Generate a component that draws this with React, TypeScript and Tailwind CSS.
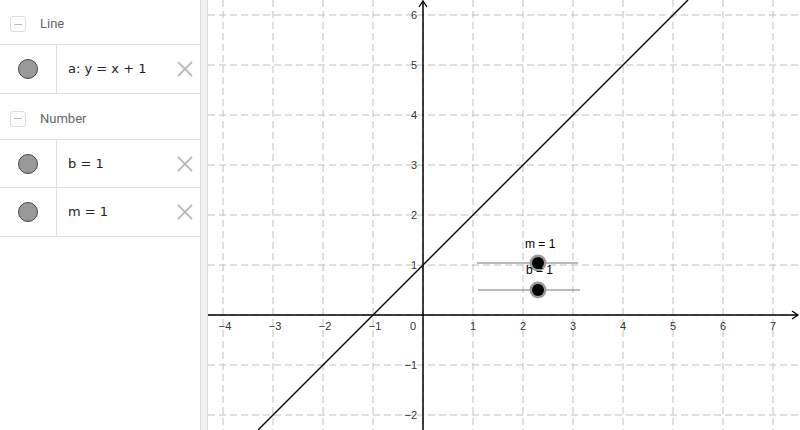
import React from "react";

const font = { fontFamily: "Roboto, 'Liberation Sans', sans-serif" };

function Header({ label, h }: { label: string; h: string }) {
  return (
    <div className={`flex items-center ${h} pt-[4px]`}>
      <div className="ml-[10px] w-[16px] h-[16px] rounded-[3px] border border-[#dddddd] flex items-center justify-center">
        <div className="w-[8px] h-[1px] bg-[#bbbbbb]" />
      </div>
      <span className="ml-[14px] text-[13px] text-[#666666]">{label}</span>
    </div>
  );
}

function Row({ text, cls }: { text: string; cls: string }) {
  return (
    <div className={`flex items-stretch border-[#e0e0e0] ${cls}`}>
      <div className="w-[57px] border-r border-[#e0e0e0] flex items-center justify-center">
        <div className="w-[20px] h-[20px] rounded-full bg-[#999999] border-[1.5px] border-[#444444]" />
      </div>
      <div
        className="flex-1 flex items-center pl-[11px] text-[13px] text-[#222222]"
        style={{ fontFamily: "'DejaVu Sans', sans-serif" }}
      >
        {text}
      </div>
      <div className="w-[30px] flex items-center justify-center">
        <svg width="16" height="16" viewBox="0 0 16 16">
          <path d="M1 1 L15 15 M15 1 L1 15" stroke="#bbbbbb" strokeWidth="1.8" fill="none" />
        </svg>
      </div>
    </div>
  );
}

export default function App() {
  const ox = 215;
  const oy = 315;
  const xs: number[] = [];
  for (let k = -4; k <= 7; k++) xs.push(k);
  const ys: number[] = [];
  for (let k = -2; k <= 6; k++) ys.push(k);
  return (
    <div className="flex w-[800px] h-[430px] bg-white overflow-hidden" style={font}>
      <div className="w-[200px] shrink-0 flex flex-col">
        <Header label="Line" h="h-[44px]" />
        <Row text="a: y = x + 1" cls="border-y h-[50px]" />
        <Header label="Number" h="h-[45px]" />
        <Row text="b = 1" cls="border-y h-[49px]" />
        <Row text="m = 1" cls="border-b h-[49px]" />
      </div>
      <div className="w-[8px] shrink-0 bg-[#f2f2f2] border-l border-r border-[#dcdcdc]" />
      <div className="flex-1 relative">
        <svg width="592" height="430" viewBox="0 0 592 430" style={{ fontFamily: "'Liberation Sans', Arial, sans-serif" }}>
          {xs.map((k) => (
            <line key={"vx" + k} x1={ox + 50 * k} y1={0} x2={ox + 50 * k} y2={430} stroke="#c0c0c0" strokeWidth="1" strokeDasharray="7 4" />
          ))}
          {ys.map((k) => (
            <line key={"hy" + k} x1={0} y1={oy - 50 * k} x2={592} y2={oy - 50 * k} stroke="#c0c0c0" strokeWidth="1" strokeDasharray="7 4" />
          ))}
          <line x1={ox} y1={1} x2={ox} y2={430} stroke="#000" strokeWidth="1.5" />
          <line x1={0} y1={oy} x2={590} y2={oy} stroke="#000" strokeWidth="1.5" />
          <polyline points={`${ox - 4},7 ${ox},1 ${ox + 4},7`} fill="none" stroke="#000" strokeWidth="1.3" />
          <polyline points={`584,${oy - 4} 590,${oy} 584,${oy + 4}`} fill="none" stroke="#000" strokeWidth="1.3" />
          {xs.filter((k) => k !== 0).map((k) => (
            <text key={"lx" + k} x={ox + 50 * k + (k < 0 ? 2 : 0)} y={330} fontSize="11" fill="#333" textAnchor="middle">
              {k < 0 ? "\u2212" + -k : String(k)}
            </text>
          ))}
          <text x={205} y={330} fontSize="11" fill="#333" textAnchor="middle">0</text>
          {ys.filter((k) => k !== 0).map((k) => (
            <text key={"ly" + k} x={209} y={oy - 50 * k + 4} fontSize="11" fill="#333" textAnchor="end">
              {k < 0 ? "\u2212" + -k : String(k)}
            </text>
          ))}
          <line x1={50} y1={430} x2={480} y2={0} stroke="#000" strokeWidth="1.4" />
          <line x1={269} y1={263} x2={370} y2={263} stroke="#777" strokeWidth="1" />
          <line x1={270} y1={290} x2={372} y2={290} stroke="#777" strokeWidth="1" />
          <circle cx={330} cy={263} r={8.5} fill="#999" />
          <circle cx={330} cy={263} r={6} fill="#000" />
          <circle cx={330} cy={290} r={8.5} fill="#999" />
          <circle cx={330} cy={290} r={6} fill="#000" />
          <text x={317} y={248} fontSize="12" fill="#000">m = 1</text>
          <text x={318} y={274} fontSize="12" fill="#000">b = 1</text>
        </svg>
      </div>
    </div>
  );
}
